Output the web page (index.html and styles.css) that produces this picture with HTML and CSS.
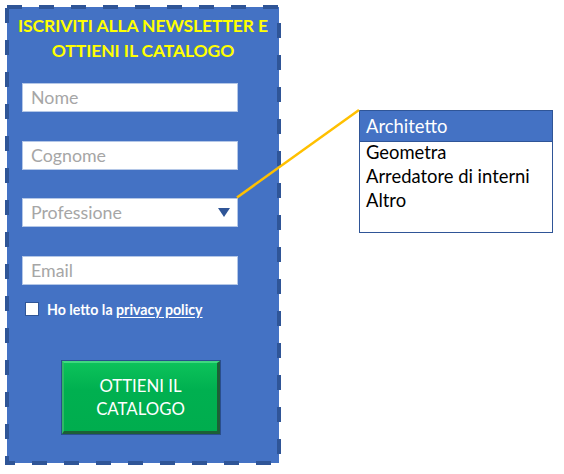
FILE: index.html
```html
<!DOCTYPE html>
<html lang="it">
<head>
<meta charset="utf-8">
<title>Newsletter</title>
<link rel="stylesheet" href="styles.css">
</head>
<body>
<div class="page">
  <form class="panel">
    <svg class="dash-frame" width="272" height="456" viewBox="0 0 272 456" aria-hidden="true">
      <rect x="0" y="0" width="272" height="456" />
    </svg>
    <h1 class="title">ISCRIVITI ALLA NEWSLETTER E<br>OTTIENI IL CATALOGO</h1>
    <div class="fields">
      <div class="field">Nome</div>
      <div class="field">Cognome</div>
      <div class="field select">Professione
        <svg class="caret" width="12" height="9" viewBox="0 0 12 9"><polygon points="0,0 12,0 6,9" /></svg>
      </div>
      <div class="field">Email</div>
    </div>
    <label class="consent"><span class="box"></span>Ho letto la&nbsp;<u>privacy policy</u></label>
    <div class="submit">OTTIENI IL<br>CATALOGO</div>
  </form>

  <ul class="options">
    <li class="active">Architetto</li>
    <li>Geometra</li>
    <li>Arredatore di interni</li>
    <li>Altro</li>
  </ul>
</div>
<svg class="connector" width="564" height="474" viewBox="0 0 564 474" aria-hidden="true">
  <line x1="237" y1="197.5" x2="359" y2="110" />
</svg>
</body>
</html>
```

FILE: styles.css
```css
html, body {
  margin: 0;
  padding: 0;
  background: #ffffff;
}

body {
  width: 564px;
  height: 474px;
  position: relative;
  overflow: hidden;
  font-family: Lato, "Open Sans", sans-serif;
}

.page {
  display: flex;
  align-items: flex-start;
  padding: 7px 0 0 7px;
}

/* signup card */
.panel {
  position: relative;
  box-sizing: border-box;
  width: 272px;
  height: 456px;
  margin: 0;
  padding: 7px 0 0 15px;
  background: #4472c4;
  display: flex;
  flex-direction: column;
}

.dash-frame {
  position: absolute;
  left: 0;
  top: 0;
  overflow: visible;
}

.dash-frame rect {
  fill: none;
  stroke: #2f5597;
  stroke-width: 4;
  stroke-dasharray: 15 17;
}

.title {
  margin: 0 0 0 -15px;
  font-size: 17.5px;
  line-height: 24.5px;
  font-weight: 700;
  color: #ffff00;
  text-align: center;
  letter-spacing: -0.1px;
}

.fields {
  margin-top: 20px;
  display: flex;
  flex-direction: column;
  gap: 28.5px;
}

.field {
  box-sizing: border-box;
  width: 216px;
  height: 29px;
  padding: 0 0 0 8px;
  background: #ffffff;
  border: 1px solid #b4c7e7;
  color: #a6a6a6;
  font-size: 17.8px;
  line-height: 27px;
  display: flex;
  align-items: center;
  justify-content: space-between;
}

.caret {
  margin-right: 7px;
  fill: #2f5597;
}

.consent {
  margin: 16px 0 0 3px;
  display: flex;
  align-items: center;
  color: #ffffff;
  font-size: 14.2px;
  font-weight: 700;
}

.consent .box {
  box-sizing: border-box;
  width: 14px;
  height: 14px;
  margin-right: 8px;
  background: #ffffff;
  border: 1px solid #2f5597;
}

.consent u {
  text-underline-offset: 2px;
}

.submit {
  box-sizing: border-box;
  width: 158px;
  height: 73px;
  margin: 43px 0 0 40px;
  background: linear-gradient(#0cc25a, #00b050 40%, #00ad4e);
  border-style: solid;
  border-width: 2px 3px 3px 2px;
  border-color: #3fd87f #1d5f36 #1d5f36 #2fb866;
  box-shadow: 0 0 0 1px #2a4e8c;
  color: #ffffff;
  font-size: 16.8px;
  line-height: 23px;
  text-align: center;
  display: flex;
  align-items: center;
  justify-content: center;
}

/* expanded list of professions */
.options {
  box-sizing: border-box;
  width: 194px;
  height: 123px;
  margin: 103px 0 0 80px;
  padding: 0;
  list-style: none;
  border: 1.5px solid #2f5597;
  background: #ffffff;
  font-size: 18.4px;
  color: #000000;
}

.options li {
  padding: 0 0 0 6px;
  line-height: 24px;
}

.options li.active {
  height: 30px;
  line-height: 31px;
  background: #4472c4;
  color: #ffffff;
  border-bottom: 1.5px solid #2f5597;
  margin-bottom: -2px;
}

.connector {
  position: absolute;
  left: 0;
  top: 0;
  pointer-events: none;
}

.connector line {
  stroke: #ffc000;
  stroke-width: 2.5;
}
```
